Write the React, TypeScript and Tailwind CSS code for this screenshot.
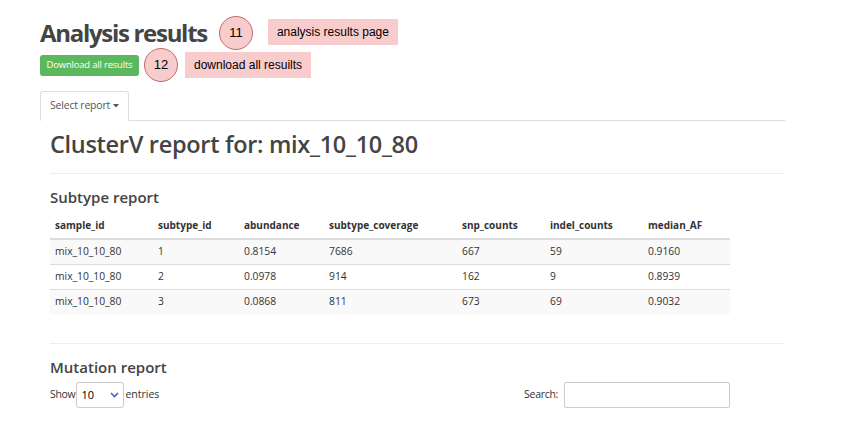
import React from "react";

const rows = [
  ["mix_10_10_80", "1", "0.8154", "7686", "667", "59", "0.9160"],
  ["mix_10_10_80", "2", "0.0978", "914", "162", "9", "0.8939"],
  ["mix_10_10_80", "3", "0.0868", "811", "673", "69", "0.9032"],
];

const headers = [
  "sample_id",
  "subtype_id",
  "abundance",
  "subtype_coverage",
  "snp_counts",
  "indel_counts",
  "median_AF",
];

const colWidths = ["w-[103px]", "w-[86px]", "w-[85px]", "w-[133px]", "w-[88px]", "w-[98px]", "w-[87px]"];

function Marker({ n }: { n: string }) {
  return (
    <div className="flex h-[34px] w-[34px] items-center justify-center rounded-full border border-[#c26a6a] bg-[#f8cccc] font-['Liberation_Sans',sans-serif] text-[13px] text-black">
      {n}
    </div>
  );
}

function Note({ children }: { children: React.ReactNode }) {
  return (
    <div className="flex h-[26px] items-center bg-[#f8cccc] px-[9px] font-['Liberation_Sans',sans-serif] text-[12px] text-black">
      {children}
    </div>
  );
}

export default function App() {
  return (
    <div className="h-[446px] w-[846px] overflow-hidden bg-white font-['Open_Sans',sans-serif] text-[#333]">
      <div className="ml-[40px] w-[745px] pt-[16px]">
        <div className="flex items-center">
          <h1 className="text-[24px] font-bold leading-[34px] tracking-[-1.3px] text-[#444]">Analysis results</h1>
          <div className="ml-[12px]">
            <Marker n="11" />
          </div>
          <div className="ml-[15px] -mt-[3px]">
            <Note>analysis results page</Note>
          </div>
        </div>
        <div className="-mt-[2px] flex items-center">
          <button className="flex h-[21px] w-[99px] items-center justify-center rounded-[3px] bg-[#5cb85c] text-[9.5px] tracking-[-0.2px] text-white">
            Download all results
          </button>
          <div className="ml-[5px]">
            <Marker n="12" />
          </div>
          <div className="ml-[7px]">
            <Note>download all resuilts</Note>
          </div>
        </div>

        <div className="mt-[9px] flex border-b border-[#ddd]">
          <div className="-mb-px flex h-[30px] items-center gap-[3px] rounded-t-[3px] border border-b-white border-[#ddd] bg-white px-[9px] text-[10.5px] tracking-[-0.2px] text-[#555]">
            Select report
            <svg width="6" height="4" viewBox="0 0 6 4">
              <path d="M0 0h6L3 3.5z" fill="#555" />
            </svg>
          </div>
        </div>

        <div className="pl-[10px]">
          <h2 className="mt-[7px] text-[23.5px] font-semibold leading-[32px] tracking-[-0.3px] text-[#444]">
            ClusterV report for: mix_10_10_80
          </h2>
          <div className="mt-[13px] border-t border-[#eee]" />

          <h3 className="mt-[13px] text-[15px] font-semibold leading-[20px] text-[#444]">Subtype report</h3>
          <table className="mt-[6px] w-[680px] text-[10.3px] text-[#333]">
            <thead>
              <tr className="h-[26px] border-b-2 border-[#ddd] text-[10px]">
                {headers.map((h, i) => (
                  <th key={h} className={`${colWidths[i]} px-[5px] text-left font-bold`}>
                    {h}
                  </th>
                ))}
              </tr>
            </thead>
            <tbody>
              {rows.map((r, ri) => (
                <tr
                  key={ri}
                  className={`h-[25px] border-t border-[#ddd] ${ri % 2 === 0 ? "bg-[#f9f9f9]" : "bg-white"}`}
                >
                  {r.map((c, ci) => (
                    <td key={ci} className="px-[5px]">
                      {c}
                    </td>
                  ))}
                </tr>
              ))}
            </tbody>
          </table>

          <div className="mt-[29px] border-t border-[#eee]" />
          <h3 className="mt-[13px] text-[15px] font-semibold leading-[20px] text-[#444]">Mutation report</h3>
          <div className="mt-[5px] flex w-[680px] items-center justify-between text-[10.5px]">
            <div className="flex items-center gap-[1px]">
              <span className="tracking-[-0.3px]">Show</span>
              <div className="flex h-[26px] w-[48px] items-center justify-between rounded-[3px] border border-[#ccc] px-[4px] text-[11px] text-black">
                <span>10</span>
                <svg width="9" height="6" viewBox="0 0 9 6">
                  <path d="M1 1l3.5 3.5L8 1" fill="none" stroke="#4a5bd1" strokeWidth="1.6" />
                </svg>
              </div>
              <span>entries</span>
            </div>
            <div className="flex items-center gap-[6px]">
              <span className="tracking-[-0.3px]">Search:</span>
              <div className="h-[26px] w-[166px] rounded-[2px] border border-[#ccc]" />
            </div>
          </div>
        </div>
      </div>
    </div>
  );
}
